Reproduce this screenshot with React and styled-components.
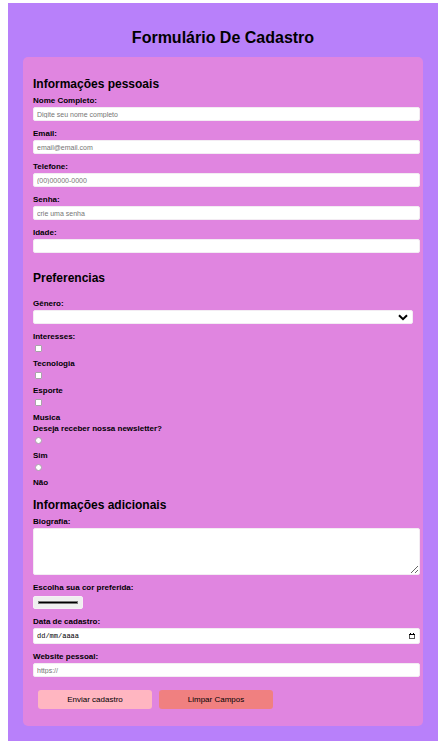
import React from "react";
import styled, { createGlobalStyle, css } from "styled-components";

const GlobalStyle = createGlobalStyle`
  *, *::before, *::after { box-sizing: border-box; }
  body {
    margin: 0;
    background: #fff;
    color: #000;
    font-family: "Liberation Sans", Arial, sans-serif;
  }
`;

const Page = styled.main`
  margin: 3px 6px 4px 8px;
  padding: 25px 15px 15px;
  background: #b880fa;
`;

const Title = styled.h1`
  margin: 0 0 9px;
  font-size: 16px;
  line-height: 20px;
  text-align: center;
`;

const Card = styled.form`
  padding: 20px 3px 17px 10px;
  border-radius: 5px;
  background: #e085e0;
`;

const Section = styled.section`
  margin-top: ${(p) => p.$top || 0}px;
`;

const Heading = styled.h2`
  margin: 0 0 ${(p) => p.$gap || 4}px;
  font-size: 12px;
  line-height: 14px;
`;

const labelText = css`
  display: block;
  font-size: 8px;
  font-weight: bold;
  line-height: 11px;
`;

const Label = styled.label`
  ${labelText}
`;

const Field = styled.div`
  display: flex;
  flex-direction: column;
  gap: ${(p) => p.$gap || 1}px;
  margin-bottom: 7px;
`;

const control = css`
  display: block;
  width: 100%;
  height: 14px;
  margin: 0;
  padding: 0 3px;
  border: 1px solid #f3ecf3;
  border-radius: 2px;
  background: #fff;
  color: #000;
  font-family: inherit;
  font-size: 7px;
`;

const Input = styled.input`
  ${control}
  &::placeholder { color: #757575; opacity: 1; }
`;

const TextArea = styled.textarea`
  ${control}
  height: 47px;
  resize: vertical;
`;

const SelectWrap = styled.div`
  position: relative;
  margin-right: 7px;
`;

const Select = styled.select`
  ${control}
  appearance: none;
`;

const Chevron = styled.svg`
  position: absolute;
  top: 4px;
  right: 5px;
  width: 10px;
  height: 7px;
  pointer-events: none;
`;

const DateBox = styled.div`
  position: relative;
`;

const DateInput = styled.input`
  ${control}
  height: 16px;
  font-family: "Liberation Mono", monospace;
  &::placeholder { color: #000; opacity: 1; }
`;

const CalendarButton = styled.button`
  position: absolute;
  top: 5px;
  right: 5px;
  width: 6px;
  height: 6px;
  padding: 0;
  border: 0;
  background: none;
  svg { display: block; }
`;

const ColorInput = styled.input`
  width: 50px;
  height: 13px;
  margin: 0;
  padding: 4px;
  border: 1px solid #f6f0f6;
  border-radius: 2px;
  background: #efefef;
  appearance: none;
  &::-webkit-color-swatch-wrapper { padding: 0; }
  &::-webkit-color-swatch {
    border: 1px solid #777;
    border-radius: 0;
    background: #000;
  }
`;

const Group = styled.fieldset`
  min-width: 0;
  margin: 0;
  padding: 0;
  border: 0;
`;

const Legend = styled.legend`
  ${labelText}
  padding: 0;
`;

const Choice = styled.div`
  display: flex;
  flex-direction: column;
`;

const Mark = styled.input`
  appearance: none;
  width: 7px;
  height: 7px;
  margin: 3px 2px 6px;
  border: 1px solid #aaa3ab;
  border-radius: ${(p) => (p.type === "radio" ? "50%" : "1px")};
  background: #fff;
  &:checked { background: #0075ff; }
`;

const Actions = styled.div`
  display: flex;
  gap: 7px;
  margin-top: 13px;
  padding-left: 5px;
`;

const Button = styled.button`
  flex: 0 1 114px;
  height: 19px;
  padding: 0;
  border: 0;
  border-radius: 3px;
  background: ${(p) => (p.type === "reset" ? "#f08080" : "#ffb6c1")};
  color: #000;
  font-family: inherit;
  font-size: 8px;
`;

function TextField({ id, label, ...rest }) {
  return (
    <Field>
      <Label htmlFor={id}>{label}</Label>
      <Input id={id} name={id} {...rest} />
    </Field>
  );
}

function Option({ id, label, ...rest }) {
  return (
    <Choice>
      <Mark id={id} {...rest} />
      <Label htmlFor={id}>{label}</Label>
    </Choice>
  );
}

export default function App() {
  return (
    <>
      <GlobalStyle />
      <Page>
        <Title>Formulário De Cadastro</Title>
        <Card onSubmit={(e) => e.preventDefault()}>
          <Section>
            <Heading>Informações pessoais</Heading>
            <TextField id="nome" label="Nome Completo:" type="text" placeholder="Digite seu nome completo" />
            <TextField id="email" label="Email:" type="email" placeholder="email@email.com" />
            <TextField id="telefone" label="Telefone:" type="tel" placeholder="(00)00000-0000" />
            <TextField id="senha" label="Senha:" type="password" placeholder="crie uma senha" />
            <TextField id="idade" label="Idade:" type="number" />
          </Section>

          <Section $top={18}>
            <Heading $gap={13}>Preferencias</Heading>
            <Field>
              <Label htmlFor="genero">Gênero:</Label>
              <SelectWrap>
                <Select id="genero" name="genero" defaultValue="">
                  <option value=""></option>
                </Select>
                <Chevron viewBox="0 0 10 7" aria-hidden="true">
                  <path d="M1 1.2 L5 5.2 L9 1.2" fill="none" stroke="#000" strokeWidth="2" />
                </Chevron>
              </SelectWrap>
            </Field>
            <Group>
              <Legend>Interesses:</Legend>
              <Option id="tecnologia" label="Tecnologia" type="checkbox" name="interesses" />
              <Option id="esporte" label="Esporte" type="checkbox" name="interesses" />
              <Option id="musica" label="Musica" type="checkbox" name="interesses" />
            </Group>
            <Group>
              <Legend>Deseja receber nossa newsletter?</Legend>
              <Option id="sim" label="Sim" type="radio" name="newsletter" />
              <Option id="nao" label="Não" type="radio" name="newsletter" />
            </Group>
          </Section>

          <Section $top={10}>
            <Heading>Informações adicionais</Heading>
            <Field>
              <Label htmlFor="biografia">Biografia:</Label>
              <TextArea id="biografia" name="biografia" />
            </Field>
            <Field $gap={3}>
              <Label htmlFor="cor">Escolha sua cor preferida:</Label>
              <ColorInput id="cor" name="cor" type="color" defaultValue="#000000" />
            </Field>
            <Field>
              <Label htmlFor="data">Data de cadastro:</Label>
              <DateBox>
                <DateInput id="data" name="data" type="text" placeholder="dd/mm/aaaa" />
                <CalendarButton type="button" aria-label="Abrir calendário">
                  <svg width="6" height="6" viewBox="0 0 6 6" shapeRendering="crispEdges" aria-hidden="true">
                    <path d="M0 1h6v5H0z M1 2v3h4V2z" fill="#555" fillRule="evenodd" />
                    <path d="M0 1h6v1H0z M1 0h1v1H1z M4 0h1v1H4z" fill="#000" />
                  </svg>
                </CalendarButton>
              </DateBox>
            </Field>
            <TextField id="website" label="Website pessoal:" type="url" placeholder="https://" />
          </Section>

          <Actions>
            <Button type="submit">Enviar cadastro</Button>
            <Button type="reset">Limpar Campos</Button>
          </Actions>
        </Card>
      </Page>
    </>
  );
}
